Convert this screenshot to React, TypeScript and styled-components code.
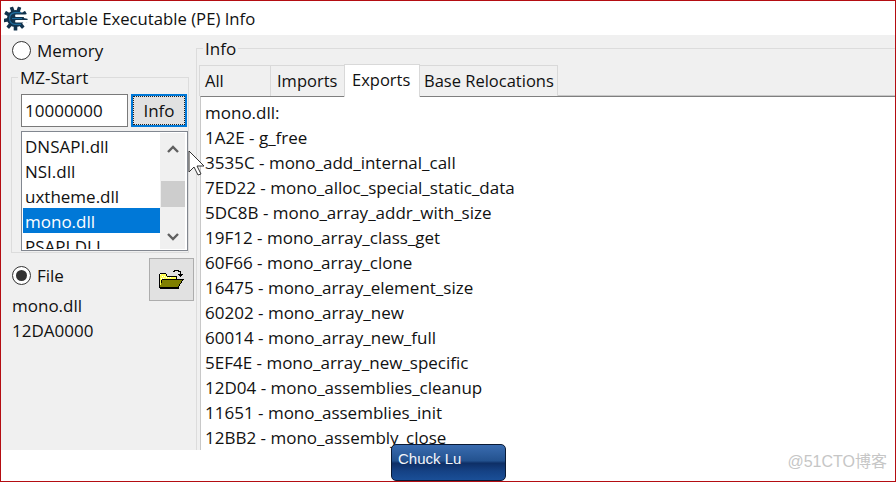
import React from "react";
import styled, { createGlobalStyle } from "styled-components";

const Global = createGlobalStyle`
  html, body { margin: 0; padding: 0; background: #fff; }
  #root { width: 896px; height: 482px; overflow: hidden; }
`;

const Frame = styled.div`
  position: relative;
  box-sizing: border-box;
  width: 896px;
  height: 482px;
  border: 1px solid #b40d12;
  background: #fff;
  display: flex;
  flex-direction: column;
  overflow: hidden;
  font-family: "Open Sans", "Noto Sans", sans-serif;
  font-size: 17px;
  color: #111;
`;

const TitleBar = styled.header`
  height: 34px;
  display: flex;
  align-items: center;
  gap: 3px;
  padding-left: 3px;
  flex: none;
  font-size: 16.7px;
`;

const Body = styled.main`
  height: 415px;
  flex: none;
  background: #f0f0f0;
  display: flex;
  overflow: hidden;
`;

const Side = styled.aside`
  width: 195px;
  flex: none;
  display: flex;
  flex-direction: column;
  padding: 6px 0 0 11px;
  box-sizing: border-box;
`;

const RadioRow = styled.label`
  display: flex;
  align-items: center;
  gap: 6px;
  height: 19px;
`;

const RadioMark = styled.span<{ $on?: boolean }>`
  width: 19px;
  height: 19px;
  box-sizing: border-box;
  border-radius: 50%;
  background: #fff;
  border: 1px solid #333;
  flex: none;
  display: flex;
  align-items: center;
  justify-content: center;
  &::after {
    content: "";
    display: ${(p) => (p.$on ? "block" : "none")};
    width: 11px;
    height: 11px;
    border-radius: 50%;
    background: #333;
  }
`;

const StartGroup = styled.fieldset`
  margin: 6px 0 0 -1px;
  padding: 0;
  width: 178px;
  height: 187px;
  box-sizing: border-box;
  border: 1px solid #dcdcdc;
  min-inline-size: 0;
`;

const GroupTitle = styled.legend<{ $inset: number }>`
  padding: 1px 2px 0;
  margin-left: ${(p) => p.$inset}px;
  line-height: 22px;
  font-size: 17px;
`;

const GroupContent = styled.div`
  padding-left: 9px;
`;

const AddressRow = styled.div`
  display: flex;
  gap: 3px;
  margin-top: 5px;
`;

const AddressInput = styled.div`
  width: 107px;
  height: 33px;
  box-sizing: border-box;
  border: 1px solid #7a7a7a;
  background: #fff;
  padding-left: 3px;
  line-height: 31px;
`;

const InfoButton = styled.button`
  width: 56px;
  height: 33px;
  box-sizing: border-box;
  border: 2px solid #0078d7;
  outline: 1px dotted #222;
  outline-offset: -3px;
  background: #e1e1e1;
  font: inherit;
  color: inherit;
  padding: 0;
`;

const DllList = styled.div`
  margin-top: 4px;
  width: 167px;
  height: 120px;
  box-sizing: border-box;
  border: 1px solid #828790;
  background: #fff;
  padding: 1px;
  display: flex;
  overflow: hidden;
`;

const DllItems = styled.ul`
  list-style: none;
  margin: 0;
  padding: 0;
  width: 137px;
  flex: none;
  overflow: hidden;
`;

const DllItem = styled.li<{ $selected?: boolean }>`
  height: 25px;
  line-height: 28px;
  padding-left: 2px;
  background: ${(p) => (p.$selected ? "#0078d7" : "transparent")};
  color: ${(p) => (p.$selected ? "#fff" : "inherit")};
`;

const ScrollTrack = styled.div`
  width: 25px;
  flex: none;
  background: #f0f0f0;
  display: flex;
  flex-direction: column;
  align-items: center;
`;

const ScrollArrow = styled.div<{ $up?: boolean }>`
  height: 25px;
  flex: none;
  margin-top: ${(p) => (p.$up ? 3 : 0)}px;
  display: flex;
  align-items: center;
  justify-content: center;
`;

const ScrollThumb = styled.div`
  width: 24px;
  height: 26px;
  background: #cdcdcd;
  margin-top: 20px;
  margin-bottom: auto;
`;

const FileRow = styled.div`
  display: flex;
  justify-content: space-between;
  align-items: flex-start;
  margin-top: 5px;
  width: 182px;
  box-sizing: border-box;
`;

const FileRadio = styled(RadioRow)`
  margin-top: 8px;
`;

const FolderButton = styled.button`
  width: 45px;
  height: 43px;
  box-sizing: border-box;
  border: 1px solid #adadad;
  background: #e1e1e1;
  padding: 0;
  display: flex;
  align-items: center;
  justify-content: center;
`;

const ModuleInfo = styled.div`
  line-height: 25px;
  margin-top: -8px;
`;

const InfoGroup = styled.fieldset`
  margin: 2px 0 0;
  padding: 0 0 0 3px;
  flex: 1;
  min-width: 0;
  box-sizing: border-box;
  border: 1px solid #dcdcdc;
  border-right: none;
  border-bottom: none;
  height: 440px;
  min-inline-size: 0;
`;

const Tabs = styled.nav`
  display: flex;
  align-items: flex-end;
  height: 31px;
  margin-top: 5px;
`;

const Tab = styled.div<{ $active?: boolean; $w: number; $pad: number }>`
  width: ${(p) => p.$w}px;
  box-sizing: border-box;
  height: ${(p) => (p.$active ? 33 : 31)}px;
  line-height: ${(p) => (p.$active ? 30 : 29)}px;
  padding-left: ${(p) => p.$pad}px;
  white-space: nowrap;
  font-size: 16.5px;
  border: 1px solid #d9d9d9;
  border-bottom: none;
  margin-left: -1px;
  background: ${(p) => (p.$active ? "#fff" : "#f0f0f0")};
  position: ${(p) => (p.$active ? "relative" : "static")};
  margin-bottom: ${(p) => (p.$active ? -1 : 0)}px;
  z-index: ${(p) => (p.$active ? 1 : 0)};
`;

const ExportList = styled.ul`
  list-style: none;
  margin: 0;
  padding: 3px 0 0 4px;
  height: 360px;
  box-sizing: border-box;
  background: #fff;
  border-top: 1px solid #7f7f7f;
  border-left: 1px solid #c8c8c8;
  box-shadow: 0 -1px 0 #c8c8c8;
  overflow: hidden;
`;

const ExportRow = styled.li`
  height: 25px;
  line-height: 25px;
  white-space: nowrap;
`;

const Footer = styled.footer`
  flex: 1;
  background: #fff;
`;

const NameBadge = styled.div`
  position: absolute;
  left: 390px;
  top: 443px;
  width: 115px;
  height: 37px;
  box-sizing: border-box;
  border: 1px solid #0a1a35;
  border-radius: 5px;
  padding: 5px 0 0 6px;
  font: 15px "Liberation Sans", sans-serif;
  color: #f4f6fa;
  background: linear-gradient(
    #3a6cb0 0%,
    #23528f 45%,
    #0e2f66 52%,
    #154285 75%,
    #1a4f97 100%
  );
`;

const Watermark = styled.div`
  position: absolute;
  right: 8px;
  bottom: 9px;
  font: 16px "Liberation Sans", "Noto Sans CJK SC", sans-serif;
  color: #c6c6c6;
`;

const Pointer = styled.svg`
  position: absolute;
  left: 187px;
  top: 149px;
`;

/* Toothed cog whose two right-hand slots leave the arms of an E */
const GearLogo = () => (
  <svg width="25" height="25" viewBox="0 0 25 25">
    <g fill="#12334d">
      {[0, 40, 80, 120, 160, 200, 240, 280, 320].map((a) => (
        <rect key={a} x="9.7" y="0.4" width="3.6" height="5" rx="0.4" transform={`rotate(${a + 20} 11.5 12.5)`} />
      ))}
    </g>
    <circle cx="11.5" cy="12.5" r="8.6" fill="#12334d" />
    <path d="M24 8.6H11.5a2 2 0 0 0 0 2.4H24zM24 14H11.5a2 2 0 0 0 0 2.4H24z" fill="#fff" />
    <path d="M17 6.6H10.5A6 6 0 0 0 5.6 12.5 6 6 0 0 0 10.5 18.4H17M8 12.5H18" fill="none" stroke="#1f6c9c" strokeWidth="1.1" />
  </svg>
);

const FolderOpen = () => (
  <svg width="25" height="22" viewBox="0 0 25 22" shapeRendering="crispEdges">
    <path d="M1 5h6v2h10v3H1z" fill="#ffff55" />
    <path d="M1 5h1v1H1zM3 7h1v1H3zM5 7h1v1H5zM7 8h1v1H7zM2 9h1v1H2zM4 9h1v1H4zM9 8h1v1H9zM11 8h1v1h-1zM1 11h1v1H1zM3 11h1v1H3zM1 14h1v1H1z" fill="#fff" />
    <path d="M1 10h2v8H1z" fill="#ffff55" />
    <path d="M3 11h21l-4 7H1z" fill="#7f7f00" />
    <path d="M1 4h6v1H1zM0 5h1v14H0zM7 5h1v2H7zM8 7h10v3h-1V8H8zM3 10h22v1h-1l-4 7h-1l4-7H3zM2 11h1v3H2zM1 18h19v2H1z" fill="#000" />
    <path d="M14 2h1V1h5v1h2v3h2v1h-1v1h-1v1h-1V7h-1V6h-1V5h2V3h-2V2h-3v1h-2z" fill="#000" />
  </svg>
);

const ChevronGlyph = ({ up }: { up?: boolean }) => (
  <svg width="12" height="8" viewBox="0 0 12 8">
    <path d={up ? "M1 7l5-5 5 5" : "M1 1l5 5 5-5"} fill="none" stroke="#606060" strokeWidth="2.4" />
  </svg>
);

const dlls = ["DNSAPI.dll", "NSI.dll", "uxtheme.dll", "mono.dll", "PSAPI.DLL"];

const exportsList = [
  "mono.dll:",
  "1A2E - g_free",
  "3535C - mono_add_internal_call",
  "7ED22 - mono_alloc_special_static_data",
  "5DC8B - mono_array_addr_with_size",
  "19F12 - mono_array_class_get",
  "60F66 - mono_array_clone",
  "16475 - mono_array_element_size",
  "60202 - mono_array_new",
  "60014 - mono_array_new_full",
  "5EF4E - mono_array_new_specific",
  "12D04 - mono_assemblies_cleanup",
  "11651 - mono_assemblies_init",
  "12BB2 - mono_assembly_close",
];

const tabs = [
  { name: "All", w: 72, pad: 5 },
  { name: "Imports", w: 75, pad: 6 },
  { name: "Exports", w: 76, pad: 7, active: true },
  { name: "Base Relocations", w: 139, pad: 4 },
];

export default function App() {
  return (
    <Frame>
      <Global />
      <TitleBar>
        <GearLogo />
        <span>Portable Executable (PE) Info</span>
      </TitleBar>
      <Body>
        <Side>
          <RadioRow>
            <RadioMark />
            <span>Memory</span>
          </RadioRow>
          <StartGroup>
            <GroupTitle $inset={6}>MZ-Start</GroupTitle>
            <GroupContent>
              <AddressRow>
                <AddressInput>10000000</AddressInput>
                <InfoButton>Info</InfoButton>
              </AddressRow>
              <DllList>
                <DllItems>
                  {dlls.map((d) => (
                    <DllItem key={d} $selected={d === "mono.dll"}>
                      {d}
                    </DllItem>
                  ))}
                </DllItems>
                <ScrollTrack>
                  <ScrollArrow $up>
                    <ChevronGlyph up />
                  </ScrollArrow>
                  <ScrollThumb />
                  <ScrollArrow>
                    <ChevronGlyph />
                  </ScrollArrow>
                </ScrollTrack>
              </DllList>
            </GroupContent>
          </StartGroup>
          <FileRow>
            <FileRadio>
              <RadioMark $on />
              <span>File</span>
            </FileRadio>
            <FolderButton>
              <FolderOpen />
            </FolderButton>
          </FileRow>
          <ModuleInfo>
            mono.dll
            <br />
            12DA0000
          </ModuleInfo>
        </Side>
        <InfoGroup>
          <GroupTitle $inset={3}>Info</GroupTitle>
          <Tabs>
            {tabs.map((t) => (
              <Tab key={t.name} $w={t.w} $pad={t.pad} $active={t.active}>
                {t.name}
              </Tab>
            ))}
          </Tabs>
          <ExportList>
            {exportsList.map((e) => (
              <ExportRow key={e}>{e}</ExportRow>
            ))}
          </ExportList>
        </InfoGroup>
      </Body>
      <Footer />
      <NameBadge>Chuck Lu</NameBadge>
      <Watermark>@51CTO博客</Watermark>
      <Pointer width="20" height="28" viewBox="0 0 20 28">
        <path d="M1 1v21l5-5 4 8 3-1-4-8h7z" fill="#fff" stroke="#333" strokeWidth="1" />
      </Pointer>
    </Frame>
  );
}
